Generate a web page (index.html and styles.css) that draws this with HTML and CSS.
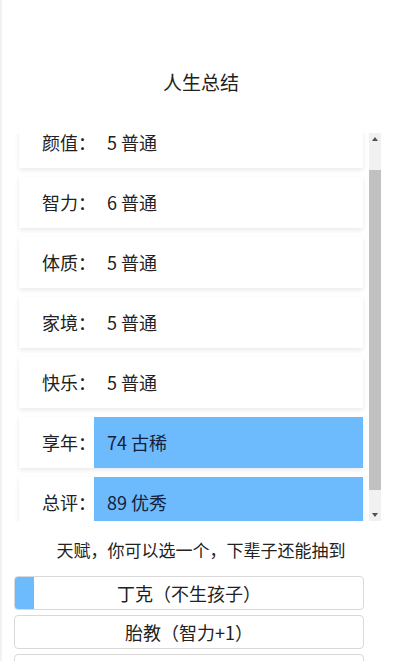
FILE: index.html
```html
<!DOCTYPE html>
<html lang="zh-CN">
<head>
  <meta charset="UTF-8" />
  <title>人生总结</title>
  <link rel="stylesheet" href="styles.css">
</head>
<body>

  <h1 class="title">人生总结</h1>

  <div class="panel">
    <div class="list" id="summaryList">
      <div class="row"><span class="label">颜值：</span><span class="value">5 普通</span></div>
      <div class="row"><span class="label">智力：</span><span class="value">6 普通</span></div>
      <div class="row"><span class="label">体质：</span><span class="value">5 普通</span></div>
      <div class="row"><span class="label">家境：</span><span class="value">5 普通</span></div>
      <div class="row"><span class="label">快乐：</span><span class="value">5 普通</span></div>
      <div class="row"><span class="label">享年：</span><span class="value grade">74 古稀</span></div>
      <div class="row"><span class="label">总评：</span><span class="value grade">89 优秀</span></div>
    </div>
    <div class="scrollbar">
      <div class="arrow up"></div>
      <div class="track"><div class="thumb"></div></div>
      <div class="arrow down"></div>
    </div>
  </div>

  <p class="hint">天赋，你可以选一个，下辈子还能抽到</p>

  <div class="talents">
    <button class="talent"><span class="fill"></span>丁克（不生孩子）</button>
    <button class="talent">胎教（智力+1）</button>
    <button class="talent">神秘的小盒子（100岁时开启）</button>
  </div>

  <script>
    // keep the list scrolled a little, as in the game screen
    document.getElementById('summaryList').scrollTop = 30;
  </script>
</body>
</html>
```

FILE: styles.css
```css
body {
  margin: 0;
  background: #FFFFFF;
  font-family: "Noto Sans CJK SC", "Noto Sans", sans-serif;
  color: #222222;
  border-left: 2px solid #F2F2F2;
  height: 661px;
  overflow: hidden;
  box-sizing: border-box;
}

.title {
  margin: 0;
  padding: 70px 0 39px;
  text-align: center;
  font-size: 19px;
  font-weight: 400;
  line-height: 24px;
}

.panel {
  display: flex;
  height: 388px;
  margin: 0 19px 0 12px;
}

.list {
  flex: 1;
  overflow: hidden;
  padding: 14px 6px 9px 5px;
}

.row {
  display: flex;
  height: 51px;
  margin-bottom: 9px;
  background: #FFFFFF;
  box-shadow: 0 2px 5px rgba(0, 0, 0, 0.09);
  font-size: 18px;
  line-height: 51px;
}

.label {
  width: 75px;
  padding-left: 23px;
  box-sizing: border-box;
  flex-shrink: 0;
  white-space: nowrap;
}

.value {
  flex: 1;
  padding-left: 13px;
}

.grade {
  background: #6DBBFD;
  color: #14213D;
}

.scrollbar {
  width: 12px;
  display: flex;
  flex-direction: column;
  background: #F1F1F1;
}

.arrow {
  height: 12px;
  display: flex;
  align-items: center;
  justify-content: center;
}

.arrow::before {
  content: "";
  border-left: 3px solid transparent;
  border-right: 3px solid transparent;
}

.up::before {
  border-bottom: 4px solid #505050;
}

.down::before {
  border-top: 4px solid #505050;
}

.track {
  flex: 1;
  padding-top: 25px;
}

.thumb {
  height: 320px;
  background: #C1C1C1;
}

.hint {
  margin: 17px 0 14px;
  text-align: center;
  font-size: 17px;
  line-height: 24px;
}

.talents {
  display: flex;
  flex-direction: column;
  gap: 5px;
  margin: 0 36px 0 12px;
}

.talent {
  position: relative;
  height: 34px;
  padding: 0;
  border: 1px solid #D9D9D9;
  border-radius: 4px;
  background: #FFFFFF;
  font-family: inherit;
  font-size: 18px;
  color: #222222;
  overflow: hidden;
}

.fill {
  position: absolute;
  left: 0;
  top: 0;
  bottom: 0;
  width: 19px;
  background: #6DBBFD;
}
```
